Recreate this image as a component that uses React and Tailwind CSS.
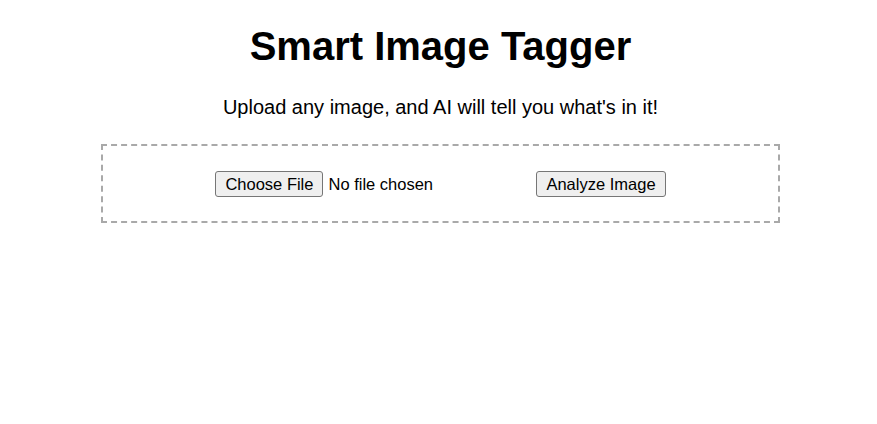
import React, { useState } from 'react';

function App() {
  const [file, setFile] = useState(null);

  const handleAnalyze = () => {
    // nothing to analyze without a backend
    if (!file) return;
  };

  return (
    <div className="min-h-screen bg-white pl-[4px] font-['Liberation_Sans',Arial,sans-serif] text-black">
      {/* Header */}
      <h1 className="pt-[23px] text-center text-[40px] font-bold leading-[46px]">
        Smart Image Tagger
      </h1>
      <p className="mt-[27px] text-center text-[20px] leading-[23px]">
        Upload any image, and AI will tell you what's in it!
      </p>

      {/* Upload box */}
      <div className="mx-auto mt-[25px] flex h-[79px] w-[679px] items-center justify-center gap-[96px] border-2 border-dashed border-[#a9a9a9]">
        <input
          type="file"
          accept="image/*"
          onChange={(e) => setFile(e.target.files[0] || null)}
          className="w-[225px] text-[16.5px] leading-[20px] file:mr-[5px] file:rounded-[3px] file:border file:border-[#767676] file:bg-[#efefef] file:px-[9px] file:py-[2px] file:text-[16.5px] file:leading-[20px]"
        />
        <button
          onClick={handleAnalyze}
          className="rounded-[3px] border border-[#767676] bg-[#efefef] px-[9px] py-[2px] text-[16.5px] leading-[20px]"
        >
          Analyze Image
        </button>
      </div>
    </div>
  );
}

export default App;
